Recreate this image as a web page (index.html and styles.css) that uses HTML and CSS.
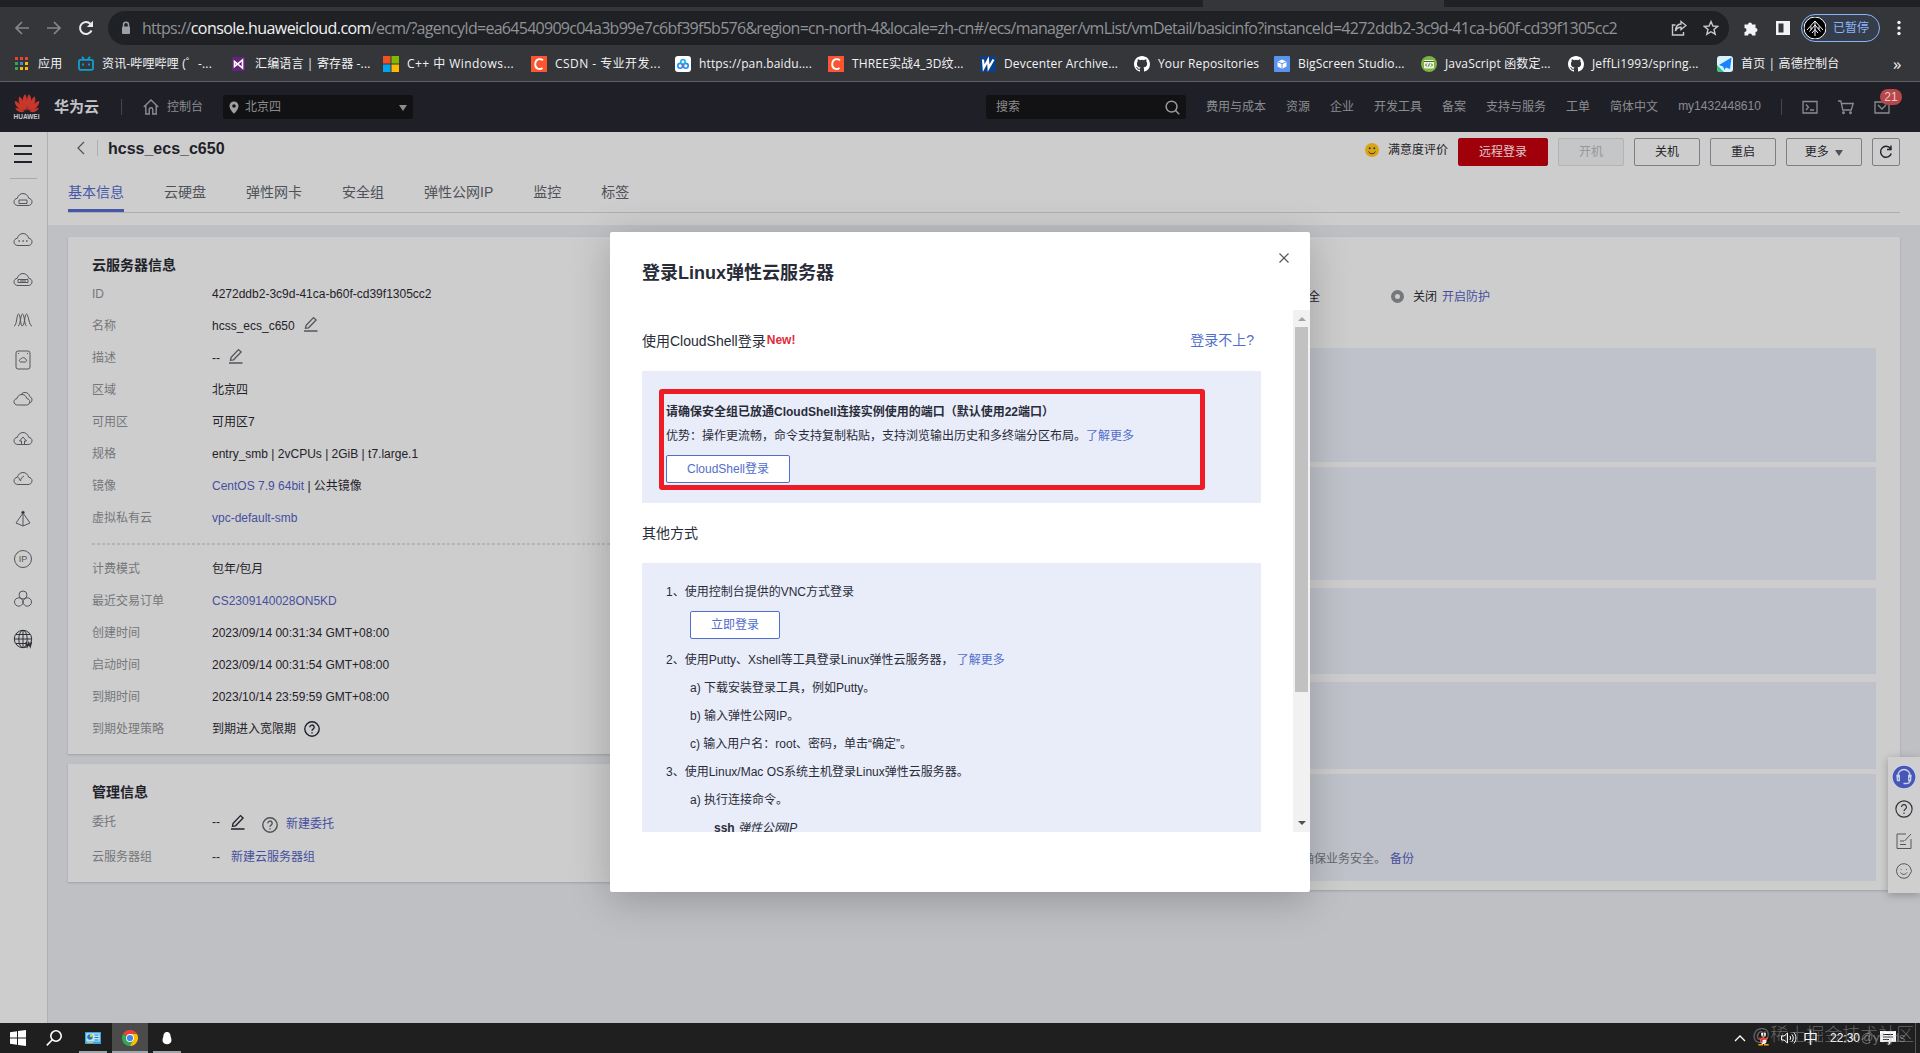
FILE: index.html
```html
<!DOCTYPE html>
<html lang="zh-CN">
<head>
    <meta charset="UTF-8">
    <title>弹性云服务器 - 控制台</title>
    <link rel="stylesheet" href="styles.css">
</head>
<body>
<!-- Iconos reutilizados -->
<svg class="defs">
    <symbol id="edit" viewBox="0 0 16 16"><path d="M3 9.5 10.5 1.6l2.6 2.4-7.6 7.8-3 .5zM1 15h13.5" /></symbol>
    <symbol id="help" viewBox="0 0 16 16"><circle cx="8" cy="8" r="7.2" /><path d="M5.8 6.3a2.2 2.2 0 1 1 3.3 1.9C8.300 8.700 8 9 8 9.800M8 11.200v1.300" /></symbol>
    <symbol id="github" viewBox="0 0 16 16"><path d="M8 0C3.580 0 0 3.580 0 8c0 3.540 2.290 6.530 5.470 7.590.4.070.55-.17.55-.38v-1.490C4 14.090 3.480 13.220 3.320 12.770c-.09-.23-.48-.94-.82-1.130-.28-.15-.68-.52-.01-.53.63-.01 1.080.58 1.230.82.720 1.210 1.870.87 2.330.66.070-.52.280-.87.510-1.070C4.780 11.340 2.920 10.630 2.920 7.580c0-.88.310-1.590.82-2.150-.08-.2-.36-1.020.08-2.120 0 0 .67-.21 2.200.82a7.600 7.600 0 0 1 4 0c1.530-1.040 2.200-.82 2.200-.82.440 1.100.160 1.920.08 2.120.510.56.820 1.270.820 2.150 0 3.070-1.870 3.750-3.650 3.950.290.250.540.730.540 1.480v2.200c0 .210.150.460.550.380A8 8 0 0 0 16 8c0-4.420-3.580-8-8-8z" /></symbol>
    <symbol id="cloud" viewBox="0 0 20 16"><path d="M5 13.500C2.500 13.500 1 12 1 9.800 1 7.800 2.500 6.500 4.300 6.300 5 3.500 7.200 1.500 10 1.500s5 2 5.700 4.800C17.500 6.500 19 7.800 19 9.800c0 2.200-1.500 3.700-4 3.700z" /></symbol>
</svg>

<!-- Navegador -->
<div class="tabstrip"><div class="active-tab"></div></div>
<div class="toolbar">
    <svg class="nav-btn off" viewBox="0 0 16 16"><path d="M15 8H2M8 2 2 8l6 6" /></svg>
    <svg class="nav-btn off" viewBox="0 0 16 16"><path d="M1 8h13M8 2l6 6-6 6" /></svg>
    <svg class="nav-btn" viewBox="0 0 16 16"><path d="M13.500 10.500A6 6 0 1 1 12.500 4" /><path class="fill" d="M15 .8V7H8.800z" /></svg>
    <div class="omnibox">
        <svg class="lock" viewBox="0 0 10 14"><path d="M2.500 6V3.800a2.500 2.500 0 0 1 5 0V6" /><rect class="fill" x="1" y="5.500" width="8" height="7.500" rx="1" /></svg>
        <span class="url">https://<b>console.huaweicloud.com</b>/ecm/?agencyId=ea64540909c04a3b99e7c6bf39f5b576&amp;region=cn-north-4&amp;locale=zh-cn#/ecs/manager/vmList/vmDetail/basicinfo?instanceId=4272ddb2-3c9d-41ca-b60f-cd39f1305cc2</span>
        <svg class="share" viewBox="0 0 16 16"><path d="M4.500 5H1.500v10h11v-3M10 1.500 15 5.500 10 9.500V7.200C7.500 7.200 5.500 8.200 4.500 11 4.700 7 6.700 4.200 10 4z" /></svg>
        <svg class="star" viewBox="0 0 16 16"><path d="M8 1.500 9.900 6l4.800.400-3.700 3.100 1.200 4.700L8 11.700l-4.200 2.500L5 9.500 1.300 6.400 6.100 6z" /></svg>
    </div>
    <svg class="ext" viewBox="0 0 16 16"><path d="M1.500 4H5a2 2 0 1 1 4 0h3.500v3.500a2 2 0 1 1 0 4V15H9a2 2 0 0 0-4 0H1.500v-3.500a2 2 0 0 0 0-4z" /></svg>
    <svg class="side" viewBox="0 0 16 16"><path fill-rule="evenodd" d="M1 1h14v14H1zM3.500 3.500v9h5v-9z" /></svg>
    <div class="profile">
        <svg viewBox="0 0 22 22"><circle cx="11" cy="11" r="11" /><path d="M3 13 11 4l8 9M5.500 14.500 11 8l5.500 6.500M8 16l3-3.500 3 3.500M11 4v15M7 9.500v3M15 9.500v3" /></svg>
        <span>已暂停</span>
    </div>
    <svg class="dots" viewBox="0 0 4 16"><circle cx="2" cy="2.500" r="1.700" /><circle cx="2" cy="8" r="1.700" /><circle cx="2" cy="13.500" r="1.700" /></svg>
</div>
<div class="bookmarks">
    <div class="bm"><svg viewBox="0 0 16 16"><path fill="#ea4335" d="M1 1h3v3H1zM6 1h3v3H6zM11 1h3v3h-3z" /><path fill="#34a853" d="M1 6h3v3H1zM1 11h3v3H1z" /><path fill="#4285f4" d="M6 6h3v3H6z" /><path fill="#fbbc04" d="M11 6h3v3h-3zM6 11h3v3H6zM11 11h3v3h-3z" /></svg><span>应用</span></div>
    <div class="bm"><svg viewBox="0 0 16 16"><path fill="none" stroke="#0f9fd4" stroke-width="1.800" d="M2.500 3.800h11a1.500 1.500 0 0 1 1.500 1.500v7a1.500 1.500 0 0 1-1.500 1.500h-11A1.500 1.500 0 0 1 1 12.300v-7a1.500 1.500 0 0 1 1.500-1.500zM4 .8l2 2.500M12 .8l-2 2.500M5 7.500v2M11 7.500v2" /></svg><span>资讯-哔哩哔哩 (゜-...</span></div>
    <div class="bm"><svg viewBox="0 0 16 16"><path fill="#68217a" d="M1 1h13v14H1z" /><path fill="none" stroke="#fff" stroke-width="1.600" d="M3.500 5.500v5L11.500 4v8z" /></svg><span>汇编语言 | 寄存器 -...</span></div>
    <div class="bm loose"><svg viewBox="0 0 16 16"><path fill="#f25022" d="M0 0h7.500v7.500H0z" /><path fill="#7fba00" d="M8.500 0H16v7.500H8.500z" /><path fill="#00a4ef" d="M0 8.500h7.500V16H0z" /><path fill="#ffb900" d="M8.500 8.500H16V16H8.500z" /></svg><span>C++ 中 Windows...</span></div>
    <div class="bm loose"><svg viewBox="0 0 16 16"><path fill="#fc5531" d="M0 0h16v16H0z" /><path fill="none" stroke="#fff" stroke-width="1.800" d="M12 4.300C9 2 4.500 3 4.200 8c-.2 5 4.300 6 7.300 3.900" /></svg><span>CSDN - 专业开发...</span></div>
    <div class="bm"><svg viewBox="0 0 16 16"><rect width="16" height="16" rx="3" fill="#fff" /><g fill="none" stroke-width="1.600"><circle cx="5.200" cy="9.800" r="2.400" stroke="#1f8fff" /><circle cx="10.800" cy="9.800" r="2.400" stroke="#1f8fff" /><circle cx="8" cy="5.800" r="2.200" stroke="#25b0e8" /><path stroke="#f0414d" d="M7 8.500 8.500 10" /></g></svg><span>https://pan.baidu....</span></div>
    <div class="bm"><svg viewBox="0 0 16 16"><path fill="#fc5531" d="M0 0h16v16H0z" /><path fill="none" stroke="#fff" stroke-width="1.800" d="M12 4.300C9 2 4.500 3 4.200 8c-.2 5 4.300 6 7.300 3.900" /></svg><span>THREE实战4_3D纹...</span></div>
    <div class="bm"><svg viewBox="0 0 16 16"><path fill="#0d3f86" d="M0 0h16v16H0z" /><path fill="none" stroke="#fff" stroke-width="2.200" d="M3 3.500 3.700 12 8 4l.6 8L13.500 3.500" /></svg><span>Devcenter Archive...</span></div>
    <div class="bm"><svg class="gh" viewBox="0 0 16 16"><use href="#github" /></svg><span>Your Repositories</span></div>
    <div class="bm"><svg viewBox="0 0 16 16"><rect width="16" height="16" rx="1" fill="#5b94ee" /><path fill="#fff" d="m8 3.500 4.500 2.200v4.800L8 12.800l-4.500-2.300V5.700z" /><path fill="none" stroke="#5b94ee" d="m3.500 5.700 4.500 2 4.500-2M8 7.700v5" /></svg><span>BigScreen Studio...</span></div>
    <div class="bm"><svg viewBox="0 0 16 16"><circle cx="8" cy="8" r="8" fill="#7cb342" /><rect x="3" y="4" width="10" height="8.500" rx="1" fill="#e8f3dc" /><path stroke="#44682a" fill="none" d="M3 5.500h10M6 7.500 4.500 9 6 10.500M10 7.500 11.500 9 10 10.500M8.500 7.500l-1 3" /></svg><span>JavaScript 函数定...</span></div>
    <div class="bm"><svg class="gh" viewBox="0 0 16 16"><use href="#github" /></svg><span>JeffLi1993/spring...</span></div>
    <div class="bm"><svg viewBox="0 0 16 16"><rect width="16" height="16" rx="3" fill="#d8f3ff" /><path fill="#35c480" d="M0 9v4a3 3 0 0 0 3 3h4z" /><path fill="#1783ff" d="M14.500 1.500 2 9l4 1.500L7.500 14 9 11.500l4 1.500z" /></svg><span>首页 | 高德控制台</span></div>
    <div class="more">»</div>
</div>

<!-- Cabecera de Huawei Cloud -->
<div class="header">
    <div class="logo">
        <svg viewBox="0 0 26 19"><g fill="#c8362c"><path d="M12.500 17C8 12 7.500 4 11 .8c2 1.500 2.600 8 1.500 16.200z" /><path d="M13.500 17C18 12 18.500 4 15 .8c-2 1.500-2.600 8-1.500 16.200z" /><path d="M11.700 17.300C6 13.500 3.500 8 5.200 3c2.500.5 5.500 7 6.500 14.300z" /><path d="M14.300 17.300C20 13.500 22.500 8 20.800 3c-2.500.5-5.500 7-6.500 14.300z" /><path d="M10.800 17.600C5 16.500.8 12.500.7 7.500c3.500.5 7.500 5 10.100 10.100z" /><path d="M15.200 17.600C21 16.500 25.200 12.500 25.300 7.500c-3.500.5-7.500 5-10.100 10.100z" /><path d="M10.300 18.300C6 19.500 2.500 18 1.200 14.300c3 .2 6.500 1.700 9.100 4z" /><path d="M15.700 18.300C20 19.500 23.500 18 24.800 14.300c-3 .2-6.500 1.700-9.100 4z" /></g></svg>
        <span>HUAWEI</span>
    </div>
    <span class="brand">华为云</span>
    <i class="sep"></i>
    <svg class="home" viewBox="0 0 16 16"><path d="M.8 8 8 1l7.200 7M2.800 6.500V15h3.400v-4.500a1.800 1.800 0 0 1 3.600 0V15h3.400V6.500" /></svg>
    <span class="console">控制台</span>
    <div class="region">
        <svg viewBox="0 0 10 13"><path fill-rule="evenodd" d="M5 .5a4.500 4.500 0 0 0-4.500 4.500C.5 8.500 5 12.800 5 12.800S9.500 8.500 9.500 5A4.500 4.500 0 0 0 5 .5zM5 3.200a1.800 1.800 0 1 1 0 3.600 1.800 1.800 0 0 1 0-3.600z" /></svg>
        <span>北京四</span>
        <i class="caret"></i>
    </div>
    <div class="search">
        <span>搜索</span>
        <svg viewBox="0 0 16 16"><circle cx="7" cy="7" r="5.800" /><path d="m11.200 11.200 4 4" /></svg>
    </div>
    <div class="links">
        <a>费用与成本</a><a>资源</a><a>企业</a><a>开发工具</a><a>备案</a><a>支持与服务</a><a>工单</a><a>简体中文</a><a class="user">my1432448610</a>
    </div>
    <i class="sep"></i>
    <div class="tools">
        <svg viewBox="0 0 16 16"><path d="M1 2.500h14v11.500H1zM4 5.500 6.500 8.200 4 11M8 11h4" /></svg>
        <svg viewBox="0 0 16 16"><path d="M0 2h2.800l2 9h8.400l2-6.500H3.500" /><circle cx="5.500" cy="13.800" r=".8" /><circle cx="12.500" cy="13.800" r=".8" /></svg>
        <svg viewBox="0 0 16 16"><path d="M1 3h14v11H1zM4 6l4 4 4-4" /></svg>
        <span class="badge">21</span>
    </div>
</div>

<div class="main">
    <div class="sidebar">
        <div class="burger"><i></i><i></i><i></i></div>
        <svg viewBox="0 0 20 16"><use href="#cloud" /><path d="M6 8h8v3.500H6z" /></svg>
        <svg viewBox="0 0 20 16"><use href="#cloud" /><path class="thick" d="M5.500 9h1.500M9.300 9h1.500M13 9h1.500" /></svg>
        <svg viewBox="0 0 20 16"><use href="#cloud" /><path d="M5 7.500h10v3H5zM7 9h6" /></svg>
        <svg viewBox="0 0 20 16"><path d="M1 14c3 0 2.500-12 4.500-12S7.500 14 9 14M5 14c2.500 0 2.500-12 4.500-12s2 12 4 12M9 14c3 0 2.500-12 4.500-12S16 14 19 14" /></svg>
        <svg viewBox="0 0 20 20"><rect x="3" y="1" width="14" height="18" rx="2" /><path d="M7.500 12c-2-1-1-3 .5-3 1-2 4-1.500 4.300 0 1.500.2 2 2.200.2 3zM5 3.500h1M14 3.500h1" /></svg>
        <svg viewBox="0 0 20 16"><path d="M4.500 14C2.500 14 1 12.700 1 10.800c0-1.800 1.300-3 3-3.200C4.500 5 6.500 3.500 9 3.500s4.200 1.600 4.800 4c1.800.2 3 1.500 3 3.300S15.400 14 13.500 14zM8 3.500C9 2 10.500 1.500 12 1.500c2.300 0 4.200 1.500 4.700 4C20 7 19.500 11 16.800 12" /></svg>
        <svg viewBox="0 0 20 16"><use href="#cloud" /><path d="M8.500 13v-3H6.500L10 6l3.500 4h-2v3" /></svg>
        <svg viewBox="0 0 20 16"><use href="#cloud" /><path d="m5.500 6.500 2 3.500c.2-2 1.500-4 3.500-5" /></svg>
        <svg viewBox="0 0 20 16"><path d="M10 1v14M10 2 3 12l7 3 7-3z" /><circle class="solid" cx="10" cy="1.500" r="1.300" /></svg>
        <svg viewBox="0 0 20 20"><circle cx="10" cy="10" r="8.500" /><text x="10" y="13">IP</text></svg>
        <svg viewBox="0 0 20 18"><circle cx="10" cy="5" r="4" /><circle cx="5.700" cy="12" r="4.200" /><circle cx="14.300" cy="12" r="4.200" /></svg>
        <svg class="dark" viewBox="0 0 20 20"><circle cx="10" cy="10" r="8.700" /><ellipse cx="10" cy="10" rx="4.200" ry="8.700" /><path d="M1.500 10h17M3 5.500h14M3 14.500h10M10 1v18" /><path class="thick" d="m13 13 1.200 4.500 1.500-3.500 1.500 3.500L18.500 13" /></svg>
    </div>

    <div class="content">
        <div class="page-head">
            <div class="title-row">
                <svg class="back" viewBox="0 0 8 14"><path d="M7 1 1 7l6 6" /></svg>
                <i class="sep"></i>
                <h1>hcss_ecs_c650</h1>
                <div class="actions">
                    <svg class="smile" viewBox="0 0 14 14"><circle cx="7" cy="7" r="7" fill="#d9a514" /><circle cx="4.700" cy="5.300" r="1" fill="#333" /><circle cx="9.300" cy="5.300" r="1" fill="#333" /><path d="M3.500 8.500c1.500 3 5.500 3 7 0" fill="none" stroke="#333" /></svg>
                    <span class="rate">满意度评价</span>
                    <button class="btn red">远程登录</button>
                    <button class="btn disabled">开机</button>
                    <button class="btn">关机</button>
                    <button class="btn">重启</button>
                    <button class="btn wide">更多 <i class="caret"></i></button>
                    <button class="btn square"><svg viewBox="0 0 14 14"><path d="M12.300 8.500A5.500 5.500 0 1 1 11.500 3.500M12 .5v4H8" /></svg></button>
                </div>
            </div>
            <div class="tabs">
                <a class="active">基本信息</a><a>云硬盘</a><a>弹性网卡</a><a>安全组</a><a>弹性公网IP</a><a>监控</a><a>标签</a>
            </div>
        </div>

        <div class="columns">
            <div class="left">
                <div class="card info">
                    <h2>云服务器信息</h2>
                    <div class="row"><label>ID</label><span>4272ddb2-3c9d-41ca-b60f-cd39f1305cc2</span></div>
                    <div class="row"><label>名称</label><span>hcss_ecs_c650</span><svg class="edit"><use href="#edit" /></svg></div>
                    <div class="row"><label>描述</label><span>--</span><svg class="edit"><use href="#edit" /></svg></div>
                    <div class="row"><label>区域</label><span>北京四</span></div>
                    <div class="row"><label>可用区</label><span>可用区7</span></div>
                    <div class="row"><label>规格</label><span>entry_smb | 2vCPUs | 2GiB | t7.large.1</span></div>
                    <div class="row"><label>镜像</label><span><a>CentOS 7.9 64bit</a> | 公共镜像</span></div>
                    <div class="row"><label>虚拟私有云</label><a>vpc-default-smb</a></div>
                    <div class="dashed"></div>
                    <div class="row"><label>计费模式</label><span>包年/包月</span></div>
                    <div class="row"><label>最近交易订单</label><a>CS2309140028ON5KD</a></div>
                    <div class="row"><label>创建时间</label><span>2023/09/14 00:31:34 GMT+08:00</span></div>
                    <div class="row"><label>启动时间</label><span>2023/09/14 00:31:54 GMT+08:00</span></div>
                    <div class="row"><label>到期时间</label><span>2023/10/14 23:59:59 GMT+08:00</span></div>
                    <div class="row"><label>到期处理策略</label><span>到期进入宽限期</span><svg class="help"><use href="#help" /></svg></div>
                </div>
                <div class="card manage">
                    <h2>管理信息</h2>
                    <div class="row"><label>委托</label><span>--</span><svg class="edit dark"><use href="#edit" /></svg><svg class="help soft"><use href="#help" /></svg><a class="create">新建委托</a></div>
                    <div class="row tall"><label>云服务器组</label><span>--</span><a class="group">新建云服务器组</a></div>
                </div>
            </div>
            <div class="card right">
                <div class="guard">
                    <span>主机安全</span>
                    <i class="dot"></i>
                    <span>关闭</span>
                    <a>开启防护</a>
                </div>
                <div class="block"></div>
                <div class="block"></div>
                <div class="block"></div>
                <div class="block"></div>
                <div class="block last"><span>确保业务安全。</span><a>备份</a></div>
            </div>
        </div>
    </div>
</div>

<!-- Accesos flotantes -->
<div class="float">
    <svg class="service" viewBox="0 0 24 24"><circle cx="12" cy="12" r="12" /><path d="M6 12.500v-2a6 6 0 0 1 12 0v2M5 10.500h2.300v5H5.500zM19 10.500h-2.300v5h1.800zM18 15.500c0 2-2 3-4 3h-2.500" /></svg>
    <svg class="q" viewBox="0 0 16 16"><use href="#help" /></svg>
    <svg viewBox="0 0 16 16"><path d="M10 1H1v14.500h14V6M15 1 8.500 8M4 8h4M4 11.500h6" /></svg>
    <svg viewBox="0 0 16 16"><path d="M15 6.500A7.300 7.300 0 1 0 12 14l3.500-5.500zM4.500 9.500c1.500 2.500 5 2.500 6.500 0M5 6v.8M10.500 6v.8" /></svg>
</div>

<!-- Ventana de inicio de sesión -->
<div class="modal">
    <svg class="close" viewBox="0 0 10 10"><path d="m.5.5 9 9M9.500.5l-9 9" /></svg>
    <h3>登录Linux弹性云服务器</h3>
    <div class="modal-body">
        <div class="scroll-content">
            <div class="section-head"><span>使用CloudShell登录</span><b>New!</b><a>登录不上?</a></div>
            <div class="panel shell">
                <p><strong>请确保安全组已放通CloudShell连接实例使用的端口（默认使用22端口）</strong></p>
                <p>优势：操作更流畅，命令支持复制粘贴，支持浏览输出历史和多终端分区布局。<a>了解更多</a></p>
                <button class="blue-btn">CloudShell登录</button>
                <div class="mark"></div>
            </div>
            <div class="section-other">其他方式</div>
            <div class="panel steps">
                <p>1、使用控制台提供的VNC方式登录</p>
                <button class="blue-btn vnc">立即登录</button>
                <p>2、使用Putty、Xshell等工具登录Linux弹性云服务器，&nbsp;<a>了解更多</a></p>
                <p class="sub">a) 下载安装登录工具，例如Putty。</p>
                <p class="sub">b) 输入弹性公网IP。</p>
                <p class="sub">c) 输入用户名：root、密码，单击“确定”。</p>
                <p>3、使用Linux/Mac OS系统主机登录Linux弹性云服务器。</p>
                <p class="sub">a) 执行连接命令。</p>
                <p class="cmd"><b>ssh</b> <em>弹性公网IP</em></p>
            </div>
        </div>
        <div class="scrollbar"><i class="up"></i><div class="thumb"></div><i class="down"></i></div>
    </div>
</div>

<!-- Barra de tareas -->
<div class="taskbar">
    <div class="task"><svg viewBox="0 0 16 16"><path fill="#fff" d="M0 2.300 7 1.200v6.300H0zM8 1l8-1v7.500H8zM0 8.500h7v6.300l-7-1zM8 8.500h8V16l-8-1.100z" /></svg></div>
    <div class="task"><svg viewBox="0 0 16 16"><g fill="none" stroke="#fff" stroke-width="1.600"><circle cx="10" cy="6" r="5.200" /><path d="M6.300 9.800.8 15.400" /></g></svg></div>
    <div class="task open"><svg viewBox="0 0 16 16"><path fill="#36a9e1" d="M0 2h16v12H0z" /><path fill="#bfe6fa" d="M1.300 3.300h13.400v8.200H1.300z" /><circle cx="5" cy="7" r="2.800" fill="#2278b5" /><path fill="#f4c430" d="M5 7V4.200A2.800 2.800 0 0 1 7.800 7zM2 12h6v1H2z" /><path stroke="#2278b5" d="M9.500 5h4M9.500 7.500h4M9.500 10h4" /></svg></div>
    <div class="task open current"><svg viewBox="0 0 16 16"><path fill="#ea4335" d="M8 8 1.070 4A8 8 0 0 1 14.930 4z" /><path fill="#fbbc04" d="M8 8V4h6.930A8 8 0 0 1 8 16z" /><path fill="#34a853" d="M1.070 4A8 8 0 0 0 8 16l3.500-6L8 8z" /><circle cx="8" cy="8" r="3.900" fill="#fff" /><circle cx="8" cy="8" r="3.100" fill="#4285f4" /></svg></div>
    <div class="task open"><svg viewBox="0 0 16 16"><path fill="#fff" d="M8 2c2.700 0 3.500 2.300 3.600 4.300.5 1.500 1 3 .8 4.700-.3 2-2 3.200-4.400 3.200S3.900 13 3.600 11c-.2-1.700.300-3.200.8-4.700C4.500 4.300 5.300 2 8 2z" /></svg></div>
    <div class="tray">
        <svg class="chev" viewBox="0 0 12 12"><path d="M1 9 6 4l5 5" /></svg>
        <svg class="qq" viewBox="0 0 16 16"><path fill="#111" d="M8 0c3.500 0 4.500 3 4.500 5.500 1 1.500 2.500 4 1.800 6L12 11l-1 3H5l-1-3-2.300.5c-.7-2 .8-4.500 1.800-6C3.500 3 4.500 0 8 0z" /><path fill="#fff" d="M5 9h6c1 3-.5 5.500-3 5.500S4 12 5 9zM5.500 2.500h2v3h-2zM8.500 2.500h2v3h-2z" /><path fill="#e02020" d="M3.500 7c3 1.500 6 1.500 9 0l.5 2c-1.500.8-4 1.300-6 1.200V13H4.800V9.500L3 9z" /><path fill="#f7a600" d="M4.800 6h6.400L8 7.500zM2.500 14.500h5V16h-5zM8.500 14.500h5V16h-5z" /></svg>
        <svg class="sound" viewBox="0 0 16 14"><path d="M1 5v4h2.500L7 12V2L3.500 5zM9.300 5c1 1.200 1 2.800 0 4M11.300 3.300c2 2.200 2 5.200 0 7.400M13.300 1.500c2.800 3.200 2.800 7.800 0 11" /></svg>
        <span class="ime">中</span>
        <span class="clock">22:30</span>
        <svg class="note" viewBox="0 0 16 16"><path fill="#fff" d="M0 1h16v11h-5l-2.500 3.500V12H0z" /><path stroke="#222" d="M3 4.500h10M3 7h10M3 9.500h6" /></svg>
        <i class="show-desktop"></i>
        <div class="watermark">@稀土掘金技术社区</div>
        <div class="author">@yngds</div>
    </div>
</div>
</body>
</html>
```
FILE: styles.css
```css
* {
    box-sizing: border-box;
}

body {
    margin: 0;
    width: 1920px;
    height: 1053px;
    overflow: hidden;
    position: relative;
    display: flex;
    flex-direction: column;
    font-family: "Liberation Sans", "Noto Sans CJK SC", sans-serif;
    font-size: 12px;
    line-height: 16px;
    color: #1f222a;
    background-color: #bec0c4;
}

h1, h2, h3, p {
    margin: 0;
}

button {
    font-family: inherit;
    font-size: 12px;
    line-height: 16px;
    padding: 0;
}

svg {
    display: block;
    flex: none;
    fill: none;
    stroke: none;
}

.defs {
    position: absolute;
    width: 0;
    height: 0;
}

.sep {
    width: 1px;
    height: 16px;
    background-color: #45464d;
}

.caret {
    display: inline-block;
    border: 4px solid transparent;
    border-top: 6px solid #8c8c90;
    border-bottom: 0;
}

/* Navegador */
.tabstrip {
    height: 7px;
    background-color: #202124;
    padding-left: 1203px;
}

.active-tab {
    width: 241px;
    height: 7px;
    background-color: #35363a;
}

.toolbar {
    height: 42px;
    background-color: #35363a;
    display: flex;
    align-items: center;
    padding-left: 14px;
}

.nav-btn {
    width: 16px;
    height: 16px;
    margin-right: 16px;
    stroke: #e8eaed;
    stroke-width: 2;
}

.nav-btn .fill {
    fill: #e8eaed;
    stroke: none;
}

.nav-btn.off {
    stroke: #85878a;
    stroke-width: 1.7;
}

.omnibox {
    width: 1621px;
    height: 34px;
    margin-left: -2px;
    border-radius: 17px;
    background-color: #202124;
    display: flex;
    align-items: center;
    padding-left: 13px;
}

.lock {
    width: 10px;
    height: 14px;
    stroke: #9aa0a6;
    stroke-width: 1.5;
}

.lock .fill {
    fill: #9aa0a6;
    stroke: none;
}

.url {
    width: 1500px;
    margin-left: 11px;
    font-family: "Open Sans", "Noto Sans", sans-serif;
    font-size: 16px;
    line-height: 22px;
    letter-spacing: -0.73px;
    color: #8f9297;
    white-space: nowrap;
}

.url b {
    font-weight: normal;
    letter-spacing: -0.55px;
    color: #f1f3f4;
}

.share, .star {
    width: 16px;
    height: 16px;
    stroke: #c6c8ca;
    stroke-width: 1.4;
}

.share {
    margin-left: auto;
}

.star {
    margin: 0 10px 0 16px;
}

.ext {
    width: 16px;
    height: 17px;
    margin-left: 14px;
    fill: #f1f3f4;
}

.side {
    width: 16px;
    height: 16px;
    margin-left: 16px;
    fill: #f1f3f4;
}

.profile {
    width: 79px;
    height: 28px;
    margin-left: 10px;
    border: 1px solid #8ab4f8;
    border-radius: 14px;
    background-color: #363d4a;
    display: flex;
    align-items: center;
    gap: 7px;
    padding-left: 2px;
    color: #8ab4f8;
}

.profile svg {
    width: 22px;
    height: 22px;
    fill: #000;
    stroke: #fff;
}

.dots {
    width: 4px;
    height: 16px;
    margin-left: 17px;
    fill: #f1f3f4;
}

.bookmarks {
    height: 33px;
    background-color: #35363a;
    border-bottom: 1px solid #5f6064;
    display: grid;
    grid-template-columns: 64px 153px 152px 148px 144px 153px 152px 154px 140px 147px 147px 149px 176px 12px;
    align-items: center;
    padding: 0 0 3px 14px;
    font-family: "Open Sans", "Noto Sans CJK SC", sans-serif;
    font-size: 12px;
    letter-spacing: 0.15px;
    color: #f1f3f4;
}

.bm {
    display: flex;
    gap: 8px;
    align-items: center;
    white-space: nowrap;
}

.bm.loose {
    letter-spacing: 0.45px;
}

.bm svg {
    width: 16px;
    height: 16px;
}

.bm .gh {
    fill: #fff;
}

.more {
    font-size: 17px;
}

/* Cabecera */
.header {
    height: 50px;
    background-color: #1f2027;
    display: flex;
    align-items: center;
    padding-left: 13px;
    color: #8c8c90;
}

.logo {
    width: 27px;
    display: flex;
    flex-direction: column;
    align-items: center;
    font-size: 6.5px;
    line-height: 8px;
    font-weight: bold;
    color: #c9c9cb;
}

.logo svg {
    width: 26px;
    height: 20px;
}

.brand {
    width: 67px;
    margin-left: 14px;
    padding-right: 1px;
    font-size: 15px;
    font-weight: bold;
    color: #c3c3c6;
}

.home {
    width: 16px;
    height: 16px;
    margin-left: 21px;
    stroke: #8c8c90;
    stroke-width: 1.4;
}

.console {
    width: 56px;
    margin-left: 8px;
}

.region {
    width: 190px;
    height: 24px;
    border-radius: 2px;
    background-color: #121214;
    display: flex;
    align-items: center;
    padding: 0 6px;
}

.region svg {
    width: 10px;
    height: 13px;
    margin-right: 6px;
    fill: #a0a0a3;
}

.region .caret {
    margin: 2px 0 0 auto;
}

.search {
    width: 200px;
    height: 24px;
    margin-left: 573px;
    border-radius: 2px;
    background-color: #121214;
    display: flex;
    align-items: center;
    justify-content: space-between;
    padding: 0 6px 0 10px;
}

.search svg {
    width: 15px;
    height: 15px;
    stroke: #9a9a9d;
    stroke-width: 1.6;
}

.links {
    display: flex;
    gap: 20px;
    width: 575px;
    margin-left: 20px;
    white-space: nowrap;
}

.links .user {
    margin-top: -1px;
}

.tools {
    position: relative;
    display: flex;
    gap: 20px;
    margin-left: 20px;
}

.tools svg {
    width: 16px;
    height: 16px;
    stroke: #8c8c90;
    stroke-width: 1.3;
}

.badge {
    position: absolute;
    left: 78px;
    top: -10px;
    width: 22px;
    height: 16px;
    border-radius: 8px;
    background-color: #b9474a;
    color: #e3cccd;
    line-height: 16px;
    text-align: center;
}

/* Contenido */
.main {
    height: 891px;
    display: flex;
}

.sidebar {
    width: 48px;
    border-right: 1px solid #aeb0b3;
    background-color: #cdcdcd;
    display: flex;
    flex-direction: column;
    align-items: center;
    padding: 0 1px 0 0;
}

.burger {
    width: 27px;
    height: 47px;
    padding: 13px 4px 0 4px;
    margin-bottom: 11px;
    border-bottom: 1px solid #a7a8aa;
}

.burger i {
    display: block;
    height: 2px;
    width: 18px;
    margin-bottom: 6px;
    background-color: #1f222a;
}

.sidebar svg {
    width: 20px;
    height: 20px;
    margin-bottom: 19.9px;
    stroke: #54565b;
}

.sidebar svg.dark {
    stroke: #2e3036;
}

.sidebar .thick {
    stroke-width: 1.5;
}

.sidebar .solid {
    fill: #1f222a;
}

.sidebar text {
    font-size: 9px;
    text-anchor: middle;
    fill: #54565b;
    stroke: none;
}

.content {
    flex: 1;
}

.page-head {
    height: 93px;
    background-color: #cdcdcd;
    padding: 0 20px;
}

.title-row {
    height: 44px;
    display: flex;
    padding: 6px 0 0 9px;
}

.back {
    width: 8px;
    height: 14px;
    margin-top: 3px;
    stroke: #4e5157;
    stroke-width: 1.2;
}

.title-row .sep {
    margin: 2px 10px 0 12px;
    background-color: #adaeb0;
}

h1 {
    font-size: 16px;
    line-height: 22px;
}

.actions {
    display: flex;
    gap: 10px;
    margin-left: auto;
}

.smile {
    width: 14px;
    height: 14px;
    margin: 5px -1px 0 0;
}

.rate {
    line-height: 24px;
}

.btn {
    width: 66px;
    height: 28px;
    border: 1px solid #7d7f84;
    border-radius: 2px;
    background-color: transparent;
    color: #1f222a;
}

.btn.red {
    width: 90px;
    border-color: #a0000a;
    background-color: #a0000a;
    color: #dfc9ca;
}

.btn.disabled {
    border-color: #b2b3b5;
    background-color: #c5c6c7;
    color: #96979a;
}

.btn.wide {
    width: 76px;
}

.btn .caret {
    margin-left: 3px;
    border-top-color: #4e5157;
}

.btn.square {
    width: 28px;
}

.btn svg {
    width: 14px;
    height: 14px;
    margin: auto;
    stroke: #1f222a;
    stroke-width: 1.4;
}

.tabs {
    height: 37px;
    border-bottom: 1px solid #aeafb1;
    display: flex;
    gap: 40px;
    font-size: 14px;
    line-height: 32px;
}

.tabs .active {
    height: 36px;
    color: #4657a8;
    border-bottom: 3px solid #4657a8;
}

.columns {
    display: flex;
    gap: 10px;
    padding: 12px 20px 0;
}

.left {
    width: 580px;
}

.card {
    background-color: #cdcdcd;
    box-shadow: 0 1px 2px rgba(80, 84, 92, 0.3);
}

.info {
    height: 517px;
    padding: 13px 24px 0;
    margin-bottom: 10px;
}

.manage {
    height: 118px;
    padding: 14px 24px 0;
}

h2 {
    font-size: 14px;
    line-height: 28px;
}

.info h2 {
    height: 28px;
    line-height: 30px;
}

.row {
    height: 32px;
    display: flex;
    align-items: center;
    white-space: nowrap;
}

.row.tall {
    height: 38px;
}

.row label {
    width: 120px;
    color: #75777b;
}

a {
    color: #464f9f;
}

.header a {
    color: #8c8c90;
}

.tabs a:not(.active) {
    color: #4e5157;
}

.edit {
    width: 16px;
    height: 16px;
    margin: -4px 0 0 8px;
    stroke: #54565b;
    stroke-width: 1.3;
}

.edit.dark {
    margin: 0 0 0 10px;
    stroke: #1f222a;
}

.help {
    width: 16px;
    height: 16px;
    margin-left: 8px;
    stroke: #1f222a;
    stroke-width: 1.4;
}

.help.soft {
    margin: 5px 8px 0 16px;
    stroke: #4e5157;
}

.create {
    margin-top: 4px;
}

.group {
    margin-left: 11px;
}

.dashed {
    height: 2px;
    margin: 9px 0 8px;
    background: repeating-linear-gradient(90deg, #b3b4b6 0 3px, transparent 3px 5px);
}

.right {
    flex: 1;
    height: 653px;
    padding: 0 24px;
    display: flex;
    flex-direction: column;
}

.guard {
    height: 111px;
    display: flex;
    justify-content: flex-end;
    padding: 48px 386px 0 0;
    line-height: 24px;
}

.dot {
    width: 13px;
    height: 13px;
    margin: 5px 9px 0 71px;
    border: 4px solid #75777b;
    border-radius: 50%;
}

.guard a {
    margin-left: 5px;
}

.block {
    height: 114px;
    margin-bottom: 5px;
    background-color: #bfc2ca;
}

.block:nth-child(3) {
    height: 113px;
    margin-bottom: 8px;
}

.block:nth-child(4) {
    height: 86px;
    margin-bottom: 8px;
}

.block:nth-child(5) {
    height: 87px;
}

.block.last {
    height: 107px;
    padding: 76px 462px 0 0;
    display: flex;
    justify-content: flex-end;
    gap: 4px;
    line-height: 18px;
    color: #66686e;
}

.float {
    position: absolute;
    left: 1888px;
    top: 757px;
    width: 32px;
    height: 136px;
    padding-top: 8px;
    background-color: #cfcfcf;
    box-shadow: 0 2px 8px rgba(0, 0, 0, 0.25);
    display: flex;
    flex-direction: column;
    align-items: center;
}

.float svg {
    width: 16px;
    height: 16px;
    margin-bottom: 14px;
    stroke: #54565b;
}

.float .q {
    width: 18px;
    height: 18px;
    margin-bottom: 15px;
    stroke: #2e3036;
}

.float .service {
    width: 24px;
    height: 24px;
    margin-bottom: 11px;
    fill: #4657b5;
    stroke: #cfd3ea;
    stroke-width: 1.3;
}

.service path {
    fill: none;
}

/* Ventana de inicio de sesión */
.modal {
    position: absolute;
    left: 610px;
    top: 232px;
    width: 700px;
    height: 660px;
    border-radius: 2px;
    background-color: #fff;
    box-shadow: 0 8px 40px rgba(0, 0, 0, 0.22);
    color: #292c38;
}

.modal a {
    color: #526ecc;
}

.close {
    position: absolute;
    left: 669px;
    top: 21px;
    width: 10px;
    height: 10px;
    stroke: #54565b;
    stroke-width: 1.2;
}

h3 {
    height: 78px;
    padding: 28px 0 0 32px;
    font-size: 18px;
    line-height: 26px;
}

.modal-body {
    height: 522px;
    display: flex;
}

.scroll-content {
    width: 683px;
    height: 522px;
    padding: 0 32px;
    overflow: hidden;
}

.section-head {
    height: 61px;
    display: flex;
    padding: 19px 7px 0 0;
    font-size: 14px;
    line-height: 24px;
}

.section-head b {
    margin-left: 1px;
    font-size: 12px;
    line-height: 22px;
    color: #e02c38;
}

.section-head a {
    margin-left: auto;
    line-height: 22px;
}

.panel {
    position: relative;
    background-color: #e9edfa;
    padding: 0 24px;
    white-space: nowrap;
}

.shell {
    height: 132px;
    padding-top: 29px;
    line-height: 24px;
}

.blue-btn {
    display: block;
    width: 124px;
    height: 28px;
    margin-top: 7px;
    border: 1px solid #526ecc;
    border-radius: 2px;
    background-color: #fff;
    color: #526ecc;
}

/* Recuadro rojo sobre el acceso por CloudShell */
.mark {
    position: absolute;
    left: 17px;
    top: 18px;
    width: 546px;
    height: 101px;
    border: 5px solid #ee1c25;
    border-radius: 3px;
}

.section-other {
    height: 60px;
    font-size: 14px;
    line-height: 60px;
}

.steps {
    height: 400px;
    padding-top: 15px;
    line-height: 28px;
}

.blue-btn.vnc {
    width: 90px;
    margin: 5px 0 7px 24px;
}

.sub {
    padding-left: 24px;
}

.cmd {
    padding-left: 48px;
}

.scrollbar {
    width: 17px;
    background-color: #f1f1f1;
    display: flex;
    flex-direction: column;
    align-items: center;
}

.scrollbar i {
    border: 4px solid transparent;
}

.scrollbar .up {
    border-top: 0;
    border-bottom-color: #a3a3a3;
    margin: 7px 0 6px;
}

.scrollbar .down {
    border-bottom: 0;
    border-top-color: #505050;
    margin: auto 0 7px;
}

.thumb {
    width: 13px;
    height: 365px;
    background-color: #c1c1c1;
}

/* Barra de tareas */
.taskbar {
    height: 30px;
    background-color: #1f1f20;
    display: flex;
    align-items: center;
}

.task {
    width: 36px;
    height: 30px;
    display: flex;
    align-items: center;
    justify-content: center;
}

.task.open {
    width: 28px;
    margin: 0 5px 0 7px;
    border-bottom: 2px solid #9fa7ad;
    padding-top: 2px;
}

.task.current {
    width: 36px;
    margin: 0 5px 0 0;
    background-color: #4b4b4c;
}

.task.open.current + .open {
    margin-left: 0;
}

.task svg {
    width: 16px;
    height: 16px;
}

.tray {
    position: relative;
    width: 220px;
    height: 30px;
    margin-left: auto;
    padding-left: 34px;
    display: flex;
    align-items: center;
    color: #fff;
}

.chev {
    width: 12px;
    height: 12px;
    stroke: #fff;
    stroke-width: 1.3;
}

.qq {
    width: 15px;
    height: 16px;
    margin-left: 10px;
}

.sound {
    width: 17px;
    height: 14px;
    margin-left: 9px;
    stroke: #fff;
}

.ime {
    margin-left: 6px;
    font-size: 15px;
}

.clock {
    width: 45px;
    margin-left: 12px;
}

.note {
    width: 16px;
    height: 16px;
    margin-left: 5px;
}

.show-desktop {
    width: 1px;
    height: 30px;
    margin-left: 19px;
    background-color: #55565a;
}

.watermark {
    position: absolute;
    left: 52px;
    top: 0;
    font-size: 18px;
    line-height: 24px;
    font-weight: 300;
    white-space: nowrap;
    color: rgba(190, 190, 190, 0.45);
}

.author {
    position: absolute;
    left: 161px;
    top: 7px;
    font-size: 12px;
    color: rgba(190, 190, 190, 0.5);
}
```
